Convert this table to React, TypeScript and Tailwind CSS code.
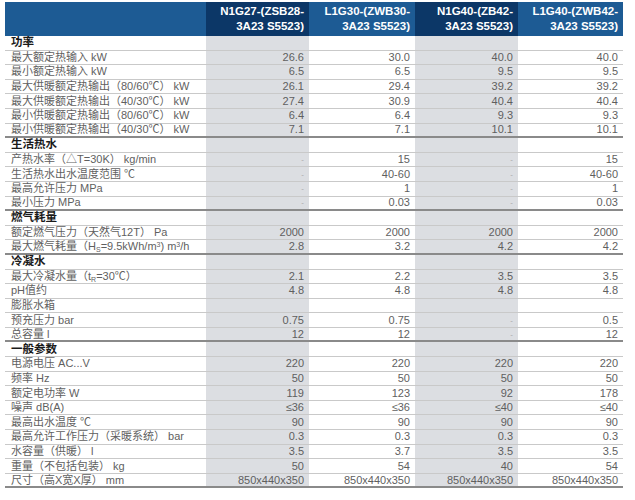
import React from 'react';

type Row = {
  label: React.ReactNode;
  values?: string[];
  section?: boolean;
  thick?: boolean;
};

const rows: Row[] = [
  { label: '功率', section: true },
  { label: '最大额定热输入 kW', values: ['26.6', '30.0', '40.0', '40.0'] },
  { label: '最小额定热输入 kW', values: ['6.5', '6.5', '9.5', '9.5'] },
  { label: '最大供暖额定热输出（80/60℃） kW', values: ['26.1', '29.4', '39.2', '39.2'] },
  { label: '最大供暖额定热输出（40/30℃） kW', values: ['27.4', '30.9', '40.4', '40.4'] },
  { label: '最小供暖额定热输出（80/60℃） kW', values: ['6.4', '6.4', '9.3', '9.3'] },
  { label: '最小供暖额定热输出（40/30℃） kW', values: ['7.1', '7.1', '10.1', '10.1'], thick: true },
  { label: '生活热水', section: true },
  { label: '产热水率（△T=30K） kg/min', values: ['-', '15', '-', '15'] },
  { label: '生活热水出水温度范围 ℃', values: ['-', '40-60', '-', '40-60'] },
  { label: '最高允许压力 MPa', values: ['-', '1', '-', '1'] },
  { label: '最小压力 MPa', values: ['-', '0.03', '-', '0.03'], thick: true },
  { label: '燃气耗量', section: true },
  { label: '额定燃气压力（天然气12T） Pa', values: ['2000', '2000', '2000', '2000'] },
  {
    label: (
      <>
        最大燃气耗量（H<sub className="text-[7px]">S</sub>=9.5kWh/m<sup className="text-[7px]">3</sup>) m<sup className="text-[7px]">3</sup>/h
      </>
    ),
    values: ['2.8', '3.2', '4.2', '4.2'],
    thick: true,
  },
  { label: '冷凝水', section: true },
  {
    label: (
      <>
        最大冷凝水量（t<sub className="text-[7px]">R</sub>=30℃）
      </>
    ),
    values: ['2.1', '2.2', '3.5', '3.5'],
  },
  { label: 'pH值约', values: ['4.8', '4.8', '4.8', '4.8'] },
  { label: '膨胀水箱', values: ['', '', '', ''] },
  { label: '预充压力 bar', values: ['0.75', '0.75', '-', '0.5'] },
  { label: '总容量 l', values: ['12', '12', '-', '12'], thick: true },
  { label: '一般参数', section: true },
  { label: '电源电压 AC...V', values: ['220', '220', '220', '220'] },
  { label: '频率 Hz', values: ['50', '50', '50', '50'] },
  { label: '额定电功率 W', values: ['119', '123', '92', '178'] },
  { label: '噪声 dB(A)', values: ['≤36', '≤36', '≤40', '≤40'] },
  { label: '最高出水温度 ℃', values: ['90', '90', '90', '90'] },
  { label: '最高允许工作压力（采暖系统） bar', values: ['0.3', '0.3', '0.3', '0.3'] },
  { label: '水容量（供暖） l', values: ['3.5', '3.7', '3.5', '3.5'] },
  { label: '重量（不包括包装） kg', values: ['50', '54', '40', '54'] },
  { label: '尺寸（高X宽X厚） mm', values: ['850x440x350', '850x440x350', '850x440x350', '850x440x350'], thick: true },
];

const models = [
  ['N1G27-(ZSB28-', '3A23 S5523)'],
  ['L1G30-(ZWB30-', '3A23 S5523)'],
  ['N1G40-(ZB42-', '3A23 S5523)'],
  ['L1G40-(ZWB42-', '3A23 S5523)'],
];

const colWidths = ['w-[103px]', 'w-[106px]', 'w-[103px]', 'w-[105px]'];

export default function App() {
  return (
    <div
      className="w-[635px] h-[500px] bg-white pt-[2px] pl-[5px]"
      style={{ fontFamily: '"Liberation Sans", "Noto Sans CJK SC", sans-serif' }}
    >
      <div className="w-[618px]">
        <div className="flex h-[34px] bg-[#1d5b94] text-white font-bold text-[11.5px] leading-[15px]">
          <div className="w-[201px]" />
          {models.map((m, i) => (
            <div
              key={i}
              className={`${colWidths[i]} ${i % 2 === 0 ? 'bg-[#0c3767]' : ''} flex flex-col items-end justify-center pr-[5px]`}
            >
              <span>{m[0]}</span>
              <span>{m[1]}</span>
            </div>
          ))}
        </div>
        {rows.map((r, idx) => (
          <div
            key={idx}
            className={`flex h-[14.6px] text-[11px] leading-[13px] ${
              r.thick ? 'border-b-2 border-[#8a8a8a]' : 'border-b border-[#c9c9c9]'
            }`}
          >
            <div
              className={`w-[201px] pl-[6px] whitespace-nowrap flex items-center ${
                r.section ? 'font-bold text-[#1a1a1a] text-[11.5px]' : 'text-[#5f5f5f]'
              }`}
            >
              <span>{r.label}</span>
            </div>
            {colWidths.map((w, i) => (
              <div
                key={i}
                className={`${w} ${i % 2 === 0 ? 'bg-[#dcdee2]' : ''} flex items-center justify-end pr-[5px] ${
                  r.values?.[i] === '-' ? 'text-[#a8a8a8] text-[8px]' : 'text-[#5f5f5f]'
                }`}
              >
                {r.values?.[i] ?? ''}
              </div>
            ))}
          </div>
        ))}
      </div>
    </div>
  );
}
